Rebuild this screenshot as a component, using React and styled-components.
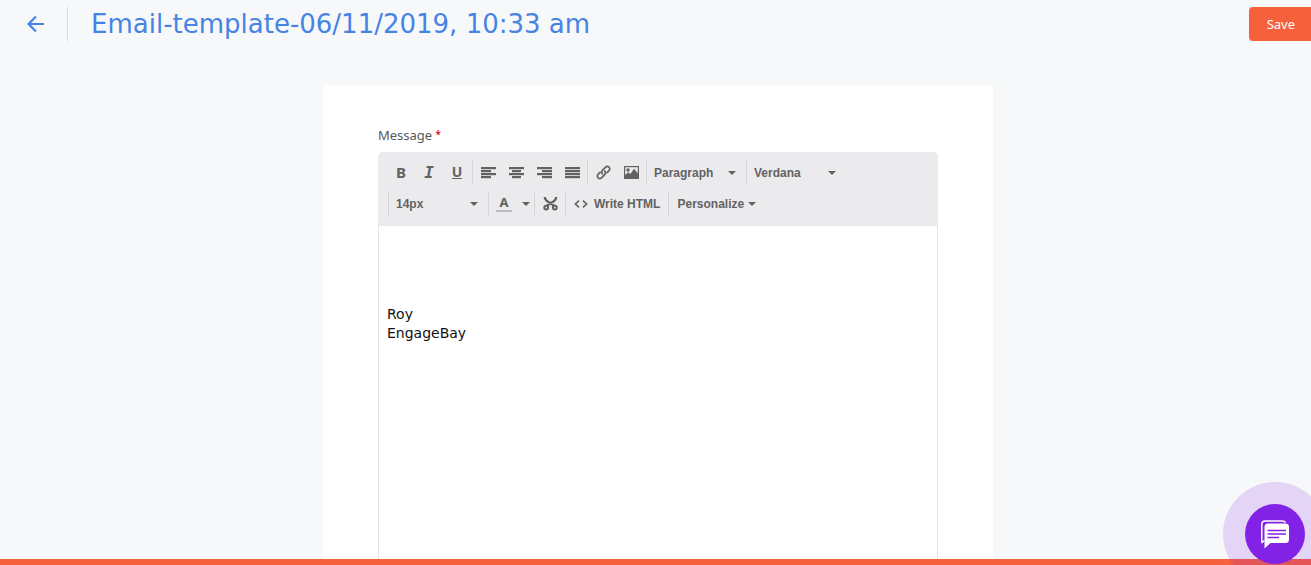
import React from "react";
import styled, { createGlobalStyle } from "styled-components";

const ALIGNMENTS = [
    { label: "Align left", lines: [[0, 15], [0, 10], [0, 15], [0, 10]] },
    { label: "Align center", lines: [[0, 15], [3, 9], [0, 15], [3, 9]] },
    { label: "Align right", lines: [[0, 15], [5, 10], [0, 15], [5, 10]] },
    { label: "Justify", lines: [[0, 15], [0, 15], [0, 15], [0, 15]] },
];

const SIGNATURE = "\n\n\n\nRoy\nEngageBay";

function ArrowIcon() {
    return (
        <svg width="18" height="18" viewBox="0 0 18 18" fill="none" stroke="currentColor" strokeWidth="2.2">
            <path d="M17 9H2M9 1.5 1.5 9 9 16.5" />
        </svg>
    );
}

function AlignIcon({ lines }) {
    return (
        <svg width="15" height="12" viewBox="0 0 15 12" fill="currentColor">
            {lines.map(([x, width], i) => (
                <rect key={i} x={x} y={i * 3} width={width} height="2.2" />
            ))}
        </svg>
    );
}

function LinkIcon() {
    return (
        <svg width="15" height="15" viewBox="0 0 15 15" fill="none" stroke="currentColor" strokeWidth="1.7" strokeLinecap="round">
            <path d="M6.4 8.8a2.4 2.4 0 0 1 0-3.4l3.2-3.2a2.4 2.4 0 0 1 3.4 3.4l-2 2" />
            <path d="M8.7 6.2a2.4 2.4 0 0 1 0 3.4l-3.2 3.2a2.4 2.4 0 0 1-3.4-3.4l2-2" />
        </svg>
    );
}

function ImageIcon() {
    return (
        <svg width="15" height="13" viewBox="0 0 15 13">
            <rect x=".6" y=".6" width="13.8" height="11.8" fill="none" stroke="currentColor" strokeWidth="1.2" />
            <circle cx="4" cy="4" r="1.7" fill="currentColor" />
            <path d="M1 12V9L4.4 6.2 6.4 8 10 2.800l4 4.600V12z" fill="currentColor" />
        </svg>
    );
}

function ScissorsIcon() {
    return (
        <svg width="15" height="15" viewBox="0 0 15 15" fill="none" stroke="currentColor" strokeWidth="2.4">
            <path d="M1.8 1c.1 3 2.200 4.600 5.700 6L11 9.800M13.200 1c-.1 3-2.200 4.600-5.700 6L4 9.800" />
            <circle cx="3.2" cy="11.600" r="1.900" strokeWidth="2" />
            <circle cx="11.800" cy="11.600" r="1.900" strokeWidth="2" />
        </svg>
    );
}

function CodeIcon() {
    return (
        <svg width="14" height="8" viewBox="0 0 14 8" fill="none" stroke="currentColor" strokeWidth="1.6">
            <path d="M5 .6 1.400 4 5 7.400M9 .6 12.600 4 9 7.400" />
        </svg>
    );
}

function ChatIcon() {
    return (
        <svg width="30" height="30" viewBox="0 0 30 30">
            <path d="M1.800 23V5.500Q1.800 2 5.300 2H22q2.500 0 3.500 1.500" fill="none" stroke="#fff" strokeWidth="1.5" />
            <path d="M1.500 24l3-2.500" stroke="#fff" strokeWidth="1.5" />
            <path d="M8 4.500H25.500q3.500 0 3.500 3.500V20.500q0 3.500-3.500 3.500H10.500L4.500 29.500V8q0-3.500 3.500-3.500z" fill="#fff" />
            <path d="M7.500 11.500H26M7.500 15H26M7.500 18.500H19" stroke="#8122e6" strokeWidth="1.300" />
        </svg>
    );
}

function Caret() {
    return (
        <svg width="8" height="4" viewBox="0 0 8 4" fill="currentColor">
            <path d="M0 0h8L4 4z" />
        </svg>
    );
}

function Dropdown({ label, value }) {
    return (
        <SelectBox>
            <Select aria-label={label} defaultValue={value}>
                <option>{value}</option>
            </Select>
            <Caret />
        </SelectBox>
    );
}

function Toolbar() {
    return (
        <ToolbarBox role="toolbar" aria-label="Formatting">
            <ToolRow>
                <ToolGroup $first>
                    <ToolButton aria-label="Bold"><Glyph>B</Glyph></ToolButton>
                    <ToolButton aria-label="Italic"><ItalicGlyph>I</ItalicGlyph></ToolButton>
                    <ToolButton aria-label="Underline"><UnderlineGlyph>U</UnderlineGlyph></ToolButton>
                </ToolGroup>
                <ToolGroup>
                    {ALIGNMENTS.map(({ label, lines }) => (
                        <ToolButton key={label} aria-label={label}><AlignIcon lines={lines} /></ToolButton>
                    ))}
                </ToolGroup>
                <ToolGroup>
                    <ToolButton aria-label="Insert link"><LinkIcon /></ToolButton>
                    <ToolButton aria-label="Insert image"><ImageIcon /></ToolButton>
                </ToolGroup>
                <ToolGroup>
                    <Dropdown label="Block format" value="Paragraph" />
                </ToolGroup>
                <ToolGroup>
                    <Dropdown label="Font family" value="Verdana" />
                </ToolGroup>
            </ToolRow>
            <ToolRow $indent>
                <ToolGroup>
                    <Dropdown label="Font size" value="14px" />
                </ToolGroup>
                <ToolGroup>
                    <ToolButton aria-label="Text color"><ColorGlyph>A</ColorGlyph></ToolButton>
                    <CaretButton aria-label="Choose text color"><Caret /></CaretButton>
                </ToolGroup>
                <ToolGroup>
                    <ToolButton aria-label="Cut"><ScissorsIcon /></ToolButton>
                </ToolGroup>
                <ToolGroup>
                    <TextButton $gap={6}><CodeIcon />Write HTML</TextButton>
                </ToolGroup>
                <ToolGroup>
                    <TextButton $gap={4}>Personalize<Caret /></TextButton>
                </ToolGroup>
            </ToolRow>
        </ToolbarBox>
    );
}

function App() {
    return (
        <Page>
            <GlobalStyle />
            <Header>
                <BackLink href="#" aria-label="Back"><ArrowIcon /></BackLink>
                <Title>Email-template-06/11/2019, 10:33 am</Title>
                <SaveButton>Save</SaveButton>
            </Header>
            <Main>
                <Card>
                    <Label htmlFor="message">Message <Required>*</Required></Label>
                    <Editor>
                        <Toolbar />
                        <Message id="message" defaultValue={SIGNATURE} spellCheck={false} />
                    </Editor>
                </Card>
            </Main>
            <BottomBar />
            <ChatHalo>
                <ChatButton aria-label="Open chat"><ChatIcon /></ChatButton>
            </ChatHalo>
        </Page>
    );
}

const GlobalStyle = createGlobalStyle`
    * {
        box-sizing: border-box;
    }

    body {
        margin: 0;
        background: #f7f8fa;
        font-family: "Noto Sans", sans-serif;
    }

    button {
        border: 0;
        padding: 0;
        cursor: pointer;
        background: none;
    }

    svg {
        display: block;
        flex-shrink: 0;
    }
`;

const Page = styled.div`
    height: 100vh;
    display: flex;
    overflow: hidden;
    flex-direction: column;
`;

const Header = styled.header`
    display: flex;
    padding-top: 6px;
    align-items: center;
`;

const BackLink = styled.a`
    width: 68px;
    height: 34px;
    display: flex;
    color: #4684e4;
    padding-left: 27px;
    align-items: center;
    border-right: 1px solid #d9dbde;
`;

const Title = styled.h1`
    flex: 1;
    margin: 0 0 0 23px;
    color: #4684e4;
    font-size: 26px;
    font-weight: 400;
    line-height: 36px;
    font-family: "DejaVu Sans", sans-serif;
`;

const SaveButton = styled.button`
    height: 34px;
    color: #fff;
    font-size: 13px;
    padding: 0 16px 0 18px;
    background: #f7603d;
    border-radius: 4px 0 0 4px;
    font-family: "Noto Sans", sans-serif;
`;

const Main = styled.main`
    flex: 1;
    display: flex;
    min-height: 0;
    padding: 43px 0 0 5px;
    justify-content: center;
`;

const Card = styled.section`
    width: 100%;
    display: flex;
    background: #fff;
    max-width: 670px;
    padding: 40px 55px 0;
    flex-direction: column;
    border-radius: 4px 4px 0 0;
`;

const Label = styled.label`
    color: #58595b;
    font-size: 13px;
    line-height: 20px;
    margin-bottom: 7px;
`;

const Required = styled.span`
    color: #e02030;
    font-size: 10px;
    font-weight: 700;
    line-height: 10px;
    vertical-align: 2px;
`;

const Editor = styled.div`
    flex: 1;
    display: flex;
    overflow: hidden;
    flex-direction: column;
    border-radius: 5px 5px 0 0;
`;

const ToolbarBox = styled.div`
    gap: 6px;
    display: flex;
    color: #626262;
    flex-direction: column;
    padding: 8px 7px 10px;
    background: #ebebed;
`;

const ToolRow = styled.div`
    display: flex;
    padding-left: ${({ $indent }) => ($indent ? "3px" : "0")};
`;

const ToolGroup = styled.div`
    height: 25px;
    display: flex;
    padding: 0 1px;
    align-items: center;
    border-left: 1px solid ${({ $first }) => ($first ? "transparent" : "#d6d6d8")};
`;

const ToolButton = styled.button`
    width: 28px;
    height: 25px;
    display: flex;
    color: inherit;
    align-items: center;
    justify-content: center;
`;

const CaretButton = styled(ToolButton)`
    width: 15px;
`;

const TextButton = styled(ToolButton)`
    width: auto;
    padding: 0 7px;
    font-size: 12px;
    font-weight: 700;
    white-space: nowrap;
    gap: ${({ $gap }) => $gap}px;
    font-family: "Liberation Sans", Arial, sans-serif;
`;

const Glyph = styled.span`
    font-size: 15px;
    font-weight: 700;
    line-height: 15px;
    font-family: "Noto Sans", sans-serif;
`;

const ItalicGlyph = styled(Glyph)`
    font-size: 16px;
    line-height: 16px;
    font-style: italic;
    font-family: "DejaVu Sans Mono", monospace;
`;

const UnderlineGlyph = styled(Glyph)`
    font-size: 14px;
    line-height: 12px;
    border-bottom: 1px solid currentColor;
`;

const ColorGlyph = styled(Glyph)`
    width: 16px;
    font-size: 13px;
    line-height: 15px;
    border-bottom: 2px solid #bdbdbf;
`;

const SelectBox = styled.div`
    width: 97px;
    height: 25px;
    display: grid;
    align-items: center;

    > * {
        grid-area: 1 / 1;
    }

    svg {
        margin-right: 9px;
        justify-self: end;
        pointer-events: none;
    }
`;

const Select = styled.select`
    border: 0;
    width: 100%;
    color: inherit;
    appearance: none;
    font-size: 12px;
    font-weight: 700;
    padding: 0 20px 0 6px;
    background: transparent;
    font-family: "Liberation Sans", Arial, sans-serif;
`;

const Message = styled.textarea`
    flex: 1;
    color: #111;
    resize: none;
    outline: none;
    font-size: 14px;
    overflow: hidden;
    line-height: 19px;
    padding: 3px 8px;
    background: #fff;
    border: 1px solid #e4e4e6;
    border-width: 0 1px;
    font-family: "DejaVu Sans", Verdana, sans-serif;
`;

const BottomBar = styled.div`
    height: 6px;
    background: #f7603d;
`;

const ChatHalo = styled.div`
    right: -16px;
    bottom: -21px;
    width: 104px;
    height: 104px;
    display: flex;
    position: fixed;
    border-radius: 50%;
    align-items: center;
    justify-content: center;
    background: rgba(129, 34, 230, 0.16);
`;

const ChatButton = styled.button`
    width: 60px;
    height: 60px;
    display: flex;
    border-radius: 50%;
    align-items: center;
    justify-content: center;
    background: #8122e6;
`;

export default App;
